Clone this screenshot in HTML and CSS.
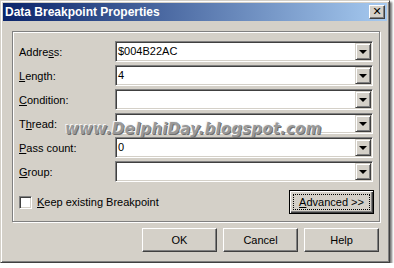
FILE: index.html
```html
<!DOCTYPE html>
<html lang="en">

<head>
    <meta charset="UTF-8">
    <title>Data Breakpoint Properties</title>
    <link rel="stylesheet" href="styles.css">
</head>

<body>
    <div class="window">
        <div class="titlebar">
            <span class="title">Data Breakpoint Properties</span>
            <span class="close">&#x2715;</span>
        </div>
        <div class="content">
            <div class="group">
                <div class="fields">
                    <label>Addre<u>s</u>s:</label>
                    <div class="combo"><span class="value">$004B22AC</span><span class="drop"></span></div>
                    <label><u>L</u>ength:</label>
                    <div class="combo"><span class="value">4</span><span class="drop"></span></div>
                    <label><u>C</u>ondition:</label>
                    <div class="combo"><span class="value"></span><span class="drop"></span></div>
                    <label>T<u>h</u>read:</label>
                    <div class="combo"><span class="value"></span><span class="drop"></span></div>
                    <label><u>P</u>ass count:</label>
                    <div class="combo"><span class="value">0</span><span class="drop"></span></div>
                    <label><u>G</u>roup:</label>
                    <div class="combo"><span class="value"></span><span class="drop"></span></div>
                </div>
                <div class="group-foot">
                    <div class="check"><span class="box"></span><span><u>K</u>eep existing Breakpoint</span></div>
                    <div class="btn default"><span class="focus"><u>A</u>dvanced &gt;&gt;</span></div>
                </div>
            </div>
            <div class="buttons">
                <div class="btn">OK</div>
                <div class="btn">Cancel</div>
                <div class="btn">Help</div>
            </div>
            <div class="watermark">www.DelphiDay.blogspot.com</div>
        </div>
    </div>
</body>

</html>
```

FILE: styles.css
```css
body {
    margin: 0;
    background: #fff;
    font: 11px "Liberation Sans", Arial, sans-serif;
    color: #000;
}

.window {
    position: relative;
    width: 390px;
    height: 263px;
    box-sizing: border-box;
    padding: 2px;
    background: #d4d0c8;
    border: 1px solid;
    border-color: #d4d0c8 #404040 #404040 #d4d0c8;
    box-shadow: inset 1px 1px 0 #fff, inset -1px -1px 0 #808080, 2px 2px 2px rgba(0, 0, 0, 0.55);
    display: flex;
    flex-direction: column;
}

.titlebar {
    height: 18px;
    display: flex;
    align-items: center;
    justify-content: space-between;
    padding: 0 2px 0 2px;
    background: linear-gradient(to right, #0a246a, #a6caf0);
}

.title {
    color: #fff;
    font-weight: bold;
    font-size: 12px;
}

.close {
    width: 16px;
    height: 14px;
    box-sizing: border-box;
    background: #d4d0c8;
    border: 1px solid;
    border-color: #fff #404040 #404040 #fff;
    box-shadow: inset -1px -1px 0 #808080;
    font-size: 11px;
    font-weight: bold;
    line-height: 12px;
    text-align: center;
    font-family: "DejaVu Sans", sans-serif;
}

.content {
    flex: 1;
    padding: 10px 7px 0 9px;
}

.group {
    height: 191px;
    box-sizing: border-box;
    border: 1px solid #808080;
    box-shadow: 1px 1px 0 #fff, inset 1px 1px 0 #fff;
    padding: 9px 6px 0 6px;
}

.fields {
    display: grid;
    grid-template-columns: 96px 258px;
    grid-auto-rows: 21px;
    row-gap: 3px;
    align-items: center;
}

.combo {
    height: 21px;
    box-sizing: border-box;
    display: flex;
    background: #fff;
    border: 1px solid;
    border-color: #808080 #fff #fff #808080;
    box-shadow: inset 1px 1px 0 #404040, inset -1px -1px 0 #d4d0c8;
    padding: 1px;
}

.combo .value {
    flex: 1;
    padding-left: 1px;
    line-height: 17px;
}

.drop {
    position: relative;
    width: 16px;
    height: 17px;
    box-sizing: border-box;
    background: #d4d0c8;
    border: 1px solid;
    border-color: #d4d0c8 #404040 #404040 #d4d0c8;
    box-shadow: inset 1px 1px 0 #fff, inset -1px -1px 0 #808080;
}

.drop::after {
    content: "";
    position: absolute;
    left: 3px;
    top: 6px;
    border-left: 4px solid transparent;
    border-right: 4px solid transparent;
    border-top: 4px solid #000;
}

.group-foot {
    display: flex;
    align-items: center;
    justify-content: space-between;
    margin-top: 8px;
    margin-right: -1px;
}

.check {
    display: flex;
    align-items: center;
    gap: 5px;
}

.box {
    width: 13px;
    height: 13px;
    box-sizing: border-box;
    background: #fff;
    border: 1px solid;
    border-color: #808080 #fff #fff #808080;
    box-shadow: inset 1px 1px 0 #404040, inset -1px -1px 0 #d4d0c8;
}

.btn {
    width: 75px;
    height: 24px;
    box-sizing: border-box;
    display: flex;
    align-items: center;
    justify-content: center;
    border: 1px solid;
    border-color: #fff #404040 #404040 #fff;
    box-shadow: inset -1px -1px 0 #808080;
}

.btn.default {
    width: 85px;
    border: 1px solid #000;
    box-shadow: inset 1px 1px 0 #fff, inset -1px -1px 0 #404040, inset -2px -2px 0 #808080;
}

.focus {
    border: 1px dotted #000;
    width: 77px;
    height: 16px;
    line-height: 14px;
    box-sizing: border-box;
    text-align: center;
    white-space: nowrap;
}

.buttons {
    display: flex;
    justify-content: flex-end;
    gap: 6px;
    margin-top: 6px;
    padding-right: 1px;
}

.watermark {
    position: absolute;
    left: 64px;
    top: 119px;
    font: italic bold 15px "DejaVu Sans", sans-serif;
    letter-spacing: 0.2px;
    color: #999;
    text-shadow: -1px -1px 0 #f4f4f4, 1px 1px 0 #6e6e6e;
}
```
